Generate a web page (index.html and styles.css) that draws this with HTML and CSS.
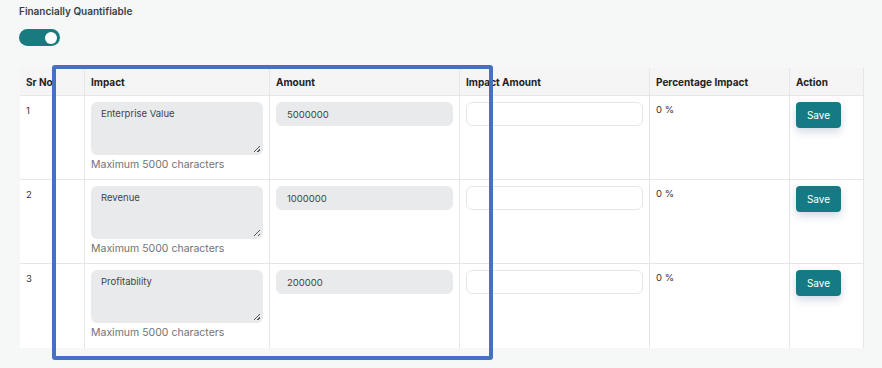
FILE: index.html
```html
<!DOCTYPE html>
<html lang="en">
<head>
    <meta charset="UTF-8">
    <meta name="viewport" content="width=device-width, initial-scale=1.0">
    <title>Financially Quantifiable</title>
    <link rel="stylesheet" href="styles.css">
</head>
<body>
    <div class="page">
        <!-- Toggle section -->
        <div class="section-title">Financially Quantifiable</div>
        <div class="toggle"><span class="knob"></span></div>

        <!-- Impact table -->
        <table class="impact-table">
            <thead>
                <tr>
                    <th class="col-sr">Sr No</th>
                    <th class="col-impact">Impact</th>
                    <th class="col-amount">Amount</th>
                    <th class="col-impact-amount">Impact Amount</th>
                    <th class="col-percent">Percentage Impact</th>
                    <th class="col-action">Action</th>
                </tr>
            </thead>
            <tbody>
                <tr>
                    <td>1</td>
                    <td>
                        <div class="textarea">Enterprise Value<span class="grip"></span></div>
                        <div class="hint">Maximum 5000 characters</div>
                    </td>
                    <td><div class="input readonly">5000000</div></td>
                    <td><div class="input"></div></td>
                    <td>0 %</td>
                    <td><button class="save-button">Save</button></td>
                </tr>
                <tr>
                    <td>2</td>
                    <td>
                        <div class="textarea">Revenue<span class="grip"></span></div>
                        <div class="hint">Maximum 5000 characters</div>
                    </td>
                    <td><div class="input readonly">1000000</div></td>
                    <td><div class="input"></div></td>
                    <td>0 %</td>
                    <td><button class="save-button">Save</button></td>
                </tr>
                <tr>
                    <td>3</td>
                    <td>
                        <div class="textarea">Profitability<span class="grip"></span></div>
                        <div class="hint">Maximum 5000 characters</div>
                    </td>
                    <td><div class="input readonly">200000</div></td>
                    <td><div class="input"></div></td>
                    <td>0 %</td>
                    <td><button class="save-button">Save</button></td>
                </tr>
            </tbody>
        </table>

        <!-- Highlight box drawn over the table -->
        <div class="highlight"></div>
    </div>
</body>
</html>
```

FILE: styles.css
```css
/* Base styles */
body {
    font-family: Inter, "Noto Sans", sans-serif;
    margin: 0;
    padding: 0;
    background-color: #f6f7f7;
    color: #2f3337;
}

.page {
    position: relative;
    padding: 5px 18px 0 20px;
    height: 363px;
}

.section-title {
    font-size: 10px;
    font-weight: 600;
    color: #3a3f44;
    margin-left: -1px;
    height: 24px;
}

/* Toggle switch */
.toggle {
    width: 41px;
    height: 17px;
    border-radius: 9px;
    background-color: #197a80;
    margin-left: -1px;
    display: flex;
    justify-content: flex-end;
    align-items: center;
    padding-right: 3px;
    box-sizing: border-box;
}

.knob {
    width: 12px;
    height: 12px;
    border-radius: 50%;
    background-color: #fff;
}

/* Table */
.impact-table {
    margin-top: 22px;
    width: 844px;
    border-collapse: collapse;
    background-color: #fff;
    font-size: 9.5px;
    table-layout: fixed;
}

.impact-table th {
    background-color: #f5f5f5;
    font-weight: 700;
    font-size: 10px;
    text-align: left;
    height: 27px;
    padding: 0 6px;
    color: #222;
    border-left: 1px solid #e6e6e6;
    border-bottom: 1px solid #e6e6e6;
}

.impact-table td {
    vertical-align: top;
    height: 84px;
    padding: 6px 6px 0;
    border-left: 1px solid #e6e6e6;
    border-bottom: 1px solid #e6e6e6;
    color: #333;
    box-sizing: border-box;
}

.impact-table tbody tr:last-child td {
    border-bottom: none;
}

.impact-table th:first-child,
.impact-table td:first-child {
    border-left: none;
}

.impact-table td:first-child {
    padding-top: 9px;
}

.impact-table td:nth-child(5) {
    padding-top: 8px;
}

.impact-table td:last-child,
.impact-table th:last-child {
    border-right: 1px solid #e6e6e6;
}

/* widths below are content widths, padding and border add 13px */
.col-sr { width: 52px; }
.col-impact { width: 172px; }
.col-amount { width: 177px; }
.col-impact-amount { width: 177px; }
.col-percent { width: 127px; }
.col-action { width: 61px; }

.textarea {
    position: relative;
    height: 53px;
    background-color: #e9eaec;
    border-radius: 6px;
    padding: 6px 10px;
    box-sizing: border-box;
    color: #444;
}

/* resize handle in the corner */
.grip {
    position: absolute;
    right: 3px;
    bottom: 3px;
    width: 6px;
    height: 6px;
    background: linear-gradient(135deg, transparent 45%, #555 45%, #555 55%, transparent 55%, transparent 75%, #555 75%, #555 85%, transparent 85%);
}

.hint {
    margin-top: 3px;
    font-size: 10.5px;
    color: #6f7378;
}

.input {
    height: 24px;
    border-radius: 6px;
    box-sizing: border-box;
    padding: 0 10px;
    line-height: 24px;
    border: 1px solid #e6e6e6;
    background-color: #fff;
}

.input.readonly {
    background-color: #e9eaec;
    border-color: #e9eaec;
    color: #444;
}

.save-button {
    background-color: #167a84;
    color: #fff;
    border: none;
    border-radius: 4px;
    width: 45px;
    height: 26px;
    font-family: inherit;
    font-size: 10px;
    padding: 0;
    box-shadow: 0 4px 8px rgba(30, 60, 120, 0.2);
    cursor: pointer;
}

/* Blue highlight box over the table */
.highlight {
    position: absolute;
    left: 52px;
    top: 65px;
    width: 433px;
    height: 287px;
    border: 4px solid #4571c4;
    border-radius: 3px;
}
```
